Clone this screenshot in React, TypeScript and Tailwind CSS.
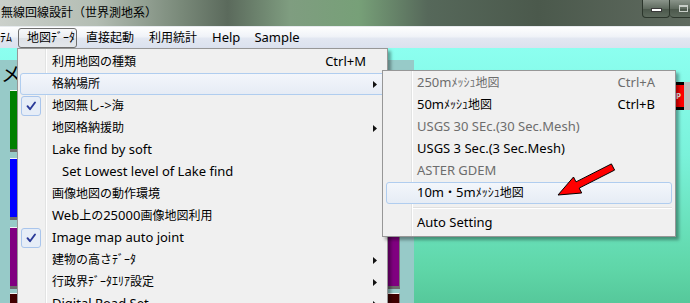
import React from "react";

const CJK = /([\u3000-\u30ff\u3400-\u9fff\uff00-\uffef]+)/;

function T({ s }: { s: string }) {
  const parts = s.split(CJK).filter((p) => p.length > 0);
  return (
    <>
      {parts.map((p, i) =>
        CJK.test(p) ? (
          <span key={i} className="text-[12px]">
            {p}
          </span>
        ) : (
          <span key={i}>{p}</span>
        )
      )}
    </>
  );
}

function Arrow() {
  return (
    <svg width="4" height="7" viewBox="0 0 4 7" className="block">
      <polygon points="0,0 4,3.5 0,7" fill="#111" />
    </svg>
  );
}

function Check() {
  return (
    <div className="w-[20px] h-[20px] rounded-[3px] border border-[#a9c5ec] bg-[#e6edf7] flex items-center justify-center">
      <svg width="12" height="12" viewBox="0 0 12 12">
        <path d="M2.5 6.2 L5 9.2 L10 2.5" fill="none" stroke="#2a3a98" strokeWidth="1.9" strokeLinecap="round" strokeLinejoin="round" />
      </svg>
    </div>
  );
}

type Item = {
  t: string;
  sc?: string;
  arrow?: boolean;
  hl?: boolean;
  check?: boolean;
  indent?: boolean;
  dis?: boolean;
};

const mainItems: Item[] = [
  { t: "利用地図の種類", sc: "Ctrl+M" },
  { t: "格納場所", arrow: true, hl: true },
  { t: "地図無し->海", check: true },
  { t: "地図格納援助", arrow: true },
  { t: "Lake find by soft" },
  { t: "Set Lowest level of Lake find", indent: true },
  { t: "画像地図の動作環境" },
  { t: "Web上の25000画像地図利用" },
  { t: "Image map auto joint", check: true },
  { t: "建物の高さﾃﾞｰﾀ", arrow: true },
  { t: "行政界ﾃﾞｰﾀｴﾘｱ設定", arrow: true },
  { t: "Digital Road Set", arrow: true },
];

const subItems: Item[] = [
  { t: "250mﾒｯｼｭ地図", sc: "Ctrl+A", dis: true },
  { t: "50mﾒｯｼｭ地図", sc: "Ctrl+B" },
  { t: "USGS 30 SEc.(30 Sec.Mesh)", dis: true },
  { t: "USGS 3 Sec.(3 Sec.Mesh)" },
  { t: "ASTER GDEM", dis: true },
  { t: "10m・5mﾒｯｼｭ地図", hl: true },
];

const hlRow =
  "border-[#b0cdef] bg-[linear-gradient(#f3f6fb,#e6ecf5)]";

function MainRow({ it }: { it: Item }) {
  return (
    <div
      className={
        "relative mx-[2px] h-[22px] rounded-[3px] border flex items-center " +
        (it.hl ? hlRow : "border-transparent")
      }
    >
      <div className="w-[31px] h-full flex items-center shrink-0">
        {it.check ? <Check /> : null}
      </div>
      <div className={"flex-1 whitespace-nowrap " + (it.indent ? "pl-[10px]" : "")}>
        <T s={it.t} />
      </div>
      {it.sc ? <div className="whitespace-nowrap">{it.sc}</div> : null}
      <div className="w-[18px] h-full flex items-center pl-[7px] shrink-0">
        {it.arrow ? <Arrow /> : null}
      </div>
    </div>
  );
}

function SubRow({ it }: { it: Item }) {
  return (
    <div
      className={
        "relative mx-[3px] h-[22px] rounded-[3px] border flex items-center " +
        (it.hl ? hlRow : "border-transparent") +
        (it.dis ? " text-[#6d6d6d]" : " text-black")
      }
    >
      <div className="w-[30px] shrink-0" />
      <div className="flex-1 whitespace-nowrap">
        <T s={it.t} />
      </div>
      {it.sc ? <div className="whitespace-nowrap pr-[16px]">{it.sc}</div> : null}
    </div>
  );
}

function Bar({ color, mt }: { color: string; mt: string }) {
  return (
    <div
      className={
        "h-[62px] w-[390px] border-t border-t-[#f4f4f4] border-b-[3px] border-b-[#6c6c6c] border-r border-r-[#7a7a7a] " +
        color +
        " " +
        mt
      }
    />
  );
}

export default function App() {
  return (
    <div className="relative w-[690px] h-[303px] overflow-hidden font-['Noto_Sans','Noto_Sans_CJK_JP',sans-serif] text-[13px] text-black flex flex-col bg-[#f0f0f0]">
      {/* Title bar */}
      <div className="h-[27px] shrink-0 flex items-start border-b border-b-[#e6eaee] bg-[linear-gradient(90deg,#cbd0cb_0%,#b3bdb3_14%,#7a8a7a_26%,#5b6a5c_33%,#7f9d80_42%,#77a078_52%,#56685a_62%,#4b594c_78%,#5f6a5f_100%)]">
        <div className="h-[26px] flex items-center pl-[1px] text-[12px] text-black whitespace-nowrap">
          無線回線設計（世界測地系）
        </div>
        <div className="ml-auto mr-[-8px] flex">
          <div className="w-[28px] h-[18px] rounded-b-[4px] border border-t-0 border-[#2c362c] bg-[linear-gradient(#8a948a,#5f6b5f_50%,#4a564a_51%,#5d6a5d)] flex items-center justify-center">
            <div className="w-[11px] h-[4px] bg-white border border-[#3a3a3a] mt-[3px]" />
          </div>
          <div className="w-[28px] h-[18px] rounded-b-[4px] border border-t-0 border-l-0 border-[#2c362c] bg-[linear-gradient(#8a948a,#5f6b5f_50%,#4a564a_51%,#5d6a5d)] flex items-center justify-center">
            <div className="w-[9px] h-[7px] border border-[#c8cec8] border-t-2" />
          </div>
        </div>
      </div>

      {/* Menu bar */}
      <div className="h-[21px] shrink-0 flex items-center whitespace-nowrap bg-[linear-gradient(#fefefe,#f0f3f8_45%,#e2e7f1_55%,#dbe1ee)]">
        <span className="ml-0">
          <T s="ﾃﾑ" />
        </span>
        <div className="ml-[6px] h-[20px] w-[59px] rounded-[3px] border border-[#6f6f6f] bg-[linear-gradient(#f7f8fa,#e9ecf0_50%,#dde1e7_51%,#e4e7eb)] flex items-center pl-[8px]">
          <T s="地図ﾃﾞｰﾀ" />
        </div>
        <span className="ml-[9px]">
          <T s="直接起動" />
        </span>
        <span className="ml-[15px]">
          <T s="利用統計" />
        </span>
        <span className="ml-[15px]">Help</span>
        <span className="ml-[14px]">Sample</span>
      </div>

      {/* Content behind */}
      <div className="flex-1 flex bg-[linear-gradient(#8cfff0_0%,#7af2da_35%,#5fd6a8_72%,#48b386_100%)]">
        <div className="mt-[12px] w-[414px] shrink-0 bg-[#97cac8] flex flex-col">
          <div className="h-[30px] flex items-center pl-[1px] text-[20px] leading-none text-black">
            メ
          </div>
          <div className="ml-[10px] flex flex-col">
            <Bar color="bg-[#008000]" mt="mt-0" />
            <Bar color="bg-[#0000ff]" mt="mt-[6px]" />
            <Bar color="bg-[#800080]" mt="mt-[7px]" />
            <Bar color="bg-[#400000]" mt="mt-[4px]" />
          </div>
        </div>
        <div className="flex-1 flex justify-end items-start">
          <div className="mt-[34px] flex h-[28px]">
            <div className="w-[11px] h-full bg-[#ff0000] border-y-[3px] border-black flex items-center pl-[3px] text-[8px] font-bold text-white leading-none">
              P
            </div>
            <div className="w-[6px] h-full bg-[#bdbdbd]" />
          </div>
        </div>
      </div>

      {/* Main dropdown */}
      <div className="absolute left-[17px] top-[48px] w-[371px] h-[270px] bg-[#f0f0f0] border border-[#979797] pt-[2px] shadow-[3px_3px_3px_rgba(0,0,0,0.35)]">
        <div className="absolute top-0 bottom-0 left-[27px] w-[2px] border-l border-l-[#e2e3e3] border-r border-r-white" />
        {mainItems.map((it, i) => (
          <MainRow key={i} it={it} />
        ))}
      </div>

      {/* Submenu */}
      <div className="absolute left-[382px] top-[70px] w-[294px] bg-[#f0f0f0] border border-[#979797] pt-[1px] pb-[2px] shadow-[3px_3px_3px_rgba(0,0,0,0.35)]">
        <div className="absolute top-0 bottom-0 left-[28px] w-[2px] border-l border-l-[#e2e3e3] border-r border-r-white" />
        {subItems.map((it, i) => (
          <SubRow key={i} it={it} />
        ))}
        <div className="h-[8px] ml-[29px] mr-[3px] flex flex-col justify-center">
          <div className="h-[1px] bg-[#e0e0e0]" />
          <div className="h-[1px] bg-white" />
        </div>
        <SubRow it={{ t: "Auto Setting" }} />
      </div>

      {/* Red arrow annotation */}
      <svg className="absolute left-0 top-0 pointer-events-none" width="690" height="303" viewBox="0 0 690 303">
        <polygon
          points="558,195 573.5,177 576,181.9 611.4,163.9 614.6,170.1 579.2,188.1 581.7,193"
          fill="#ff0000"
          stroke="#000"
          strokeWidth="1"
          strokeLinejoin="miter"
        />
      </svg>
    </div>
  );
}
